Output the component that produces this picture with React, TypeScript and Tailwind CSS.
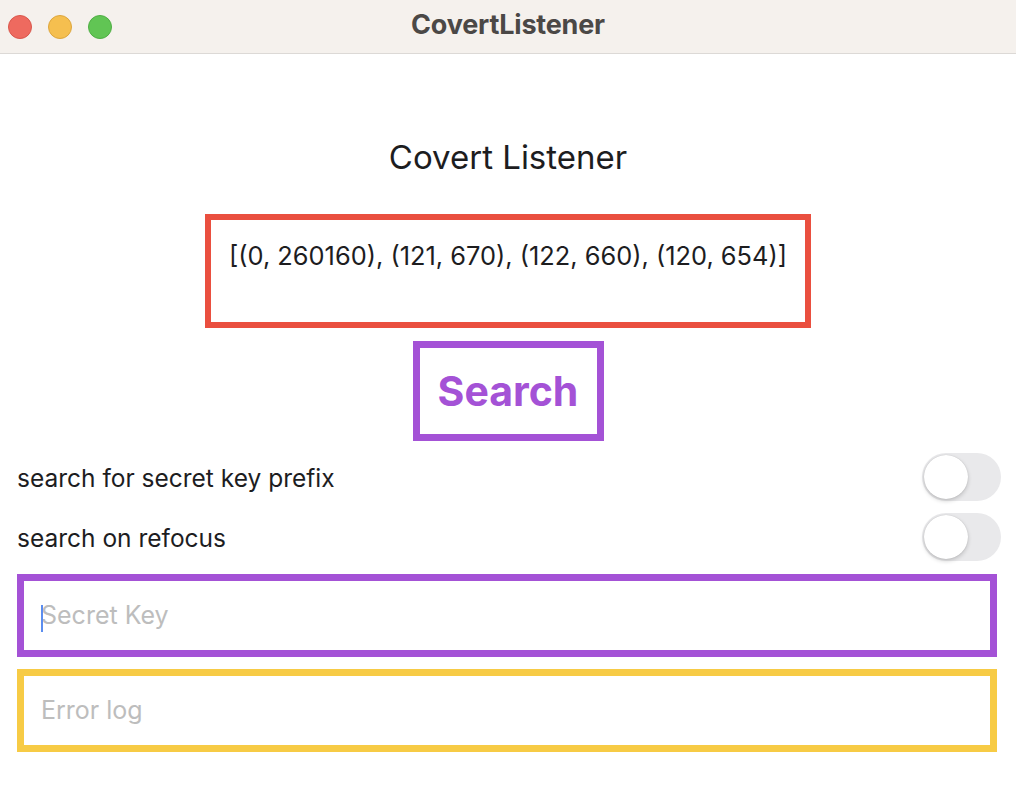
import { useState } from "react";

function Toggle({ on, onChange }: { on: boolean; onChange: (v: boolean) => void }) {
  return (
    <button
      type="button"
      onClick={() => onChange(!on)}
      className={`flex h-[48px] w-[79px] shrink-0 items-center rounded-full p-[2px] transition-colors ${
        on ? "justify-end bg-[#34c759]" : "justify-start bg-[#e9e9eb]"
      }`}
    >
      <span className="block h-[44px] w-[44px] rounded-full bg-white shadow-[0_2px_4px_rgba(0,0,0,0.18),0_0_1px_rgba(0,0,0,0.2)]" />
    </button>
  );
}

export default function App() {
  const [prefix, setPrefix] = useState(false);
  const [refocus, setRefocus] = useState(false);

  return (
    <div className="flex h-[796px] w-[1016px] flex-col overflow-hidden bg-white font-['Inter',sans-serif] text-[#1d1d1f]">
      {/* title bar */}
      <div className="grid h-[54px] shrink-0 grid-cols-[1fr_auto_1fr] items-center border-b border-[#dcd9d6] bg-[#f5f1ed]">
        <div className="flex items-center gap-[16px] pl-[8px]">
          <span className="h-[24px] w-[24px] rounded-full border border-[#d9574c] bg-[#ee6a5f]" />
          <span className="h-[24px] w-[24px] rounded-full border border-[#dda63d] bg-[#f5bf4f]" />
          <span className="h-[24px] w-[24px] rounded-full border border-[#4fae44] bg-[#61c554]" />
        </div>
        <div className="pb-[2px] text-[27px] font-bold tracking-[-0.2px] text-[#4b4846]">CovertListener</div>
        <div />
      </div>

      {/* content */}
      <div className="flex flex-col items-center pt-[83px]">
        <h1 className="text-[33px] leading-[40px] font-normal">Covert Listener</h1>

        <div className="mt-[37px] flex h-[114px] w-[606px] justify-center border-[6px] border-[#ea4f3f] pt-[20px] text-[25.4px] leading-[32px]">
          [(0, 260160), (121, 670), (122, 660), (120, 654)]
        </div>

        <button
          type="button"
          className="mt-[13px] flex h-[100px] w-[191px] items-center justify-center border-[7px] border-[#a452d6] pt-[2px] text-[41px] font-bold text-[#a452d6]"
        >
          Search
        </button>
      </div>

      <div className="mt-[12px] flex flex-col gap-[12px] pl-[17px] pr-[15px]">
        <div className="flex items-center justify-between">
          <span className="pt-[2px] text-[24.5px]">search for secret key prefix</span>
          <Toggle on={prefix} onChange={setPrefix} />
        </div>
        <div className="flex items-center justify-between">
          <span className="pt-[2px] text-[24.5px]">search on refocus</span>
          <Toggle on={refocus} onChange={setRefocus} />
        </div>
      </div>

      <div className="mt-[13px] flex flex-col gap-[12px] pl-[17px] pr-[19px]">
        <div className="relative flex h-[83px] items-center border-[7px] border-[#a452d6] pl-[17px]">
          <span className="absolute left-[17px] top-[24px] h-[27px] w-[2px] bg-[#5b8def]" />
          <input
            className="w-full bg-transparent text-[25px] outline-none placeholder:text-[#bdbdbd]"
            placeholder="Secret Key"
          />
        </div>
        <div className="flex h-[83px] items-center border-[7px] border-[#f7cb45] pl-[17px]">
          <input
            className="w-full bg-transparent text-[25px] outline-none placeholder:text-[#bdbdbd]"
            placeholder="Error log"
          />
        </div>
      </div>
    </div>
  );
}
